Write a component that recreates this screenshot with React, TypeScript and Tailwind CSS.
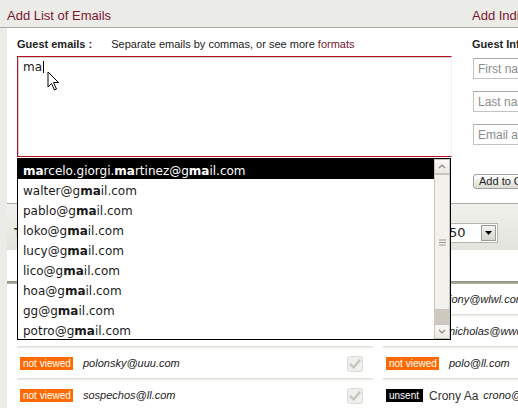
const suggestions = [
  "marcelo.giorgi.martinez@gmail.com",
  "walter@gmail.com",
  "pablo@gmail.com",
  "loko@gmail.com",
  "lucy@gmail.com",
  "lico@gmail.com",
  "hoa@gmail.com",
  "gg@gmail.com",
  "potro@gmail.com",
];

type Cell = { badge: string; name?: string; email: string };
type Row = { left: Cell; right: Cell };

const rows: Row[] = [
  { left: { badge: "not viewed", email: "martin@wlwl.com" }, right: { badge: "not viewed", email: "jony@wlwl.com" } },
  { left: { badge: "not viewed", email: "pedro@wwc.com" }, right: { badge: "not viewed", email: "nicholas@wwc.com" } },
  { left: { badge: "not viewed", email: "polonsky@uuu.com" }, right: { badge: "not viewed", email: "polo@ll.com" } },
  { left: { badge: "not viewed", email: "sospechos@ll.com" }, right: { badge: "unsent", name: "Crony Aa", email: "crono@ll.com" } },
];

function Match({ text }: { text: string }) {
  const parts = text.split("ma");
  return (
    <>
      {parts.map((part, i) => (
        <span key={i}>
          {i > 0 && <b className="font-bold">ma</b>}
          {part}
        </span>
      ))}
    </>
  );
}

function Badge({ kind }: { kind: string }) {
  if (kind === "unsent") {
    return (
      <span className="flex h-[13px] w-[37px] shrink-0 items-center bg-black pl-[3px] text-[10px] leading-[13px] text-white">
        unsent
      </span>
    );
  }
  return (
    <span className="flex h-[13px] w-[53px] shrink-0 items-center bg-[#ff6a00] pl-[3px] text-[10px] leading-[13px] text-white">
      {kind}
    </span>
  );
}

function CheckIcon() {
  return (
    <svg width="16" height="16" viewBox="0 0 16 16" className="ml-auto mr-[10px] shrink-0">
      <rect x="0.5" y="0.5" width="15" height="15" rx="2" fill="#efefec" stroke="#dcdcd6" />
      <path d="M3.5 8.5 L6.5 11.5 L12.5 4.5" fill="none" stroke="#c4c4bf" strokeWidth="2.4" strokeLinecap="round" strokeLinejoin="round" />
    </svg>
  );
}

function Separator() {
  return <div className="h-[3px] bg-gradient-to-b from-[#d9d9d2] to-white" />;
}

function GuestCell({ cell, check }: { cell: Cell; check: boolean }) {
  return (
    <div className="flex h-[29px] items-center whitespace-nowrap pl-[3px]">
      <Badge kind={cell.badge} />
      {cell.name && <span className="ml-[6px] text-[12px] text-[#333]">{cell.name}</span>}
      <span className={`${cell.name ? "ml-[5px]" : "ml-[10px]"} text-[11px] italic text-[#222]`}>
        {cell.email}
      </span>
      {check && <CheckIcon />}
    </div>
  );
}

function ScrollArrow({ up }: { up: boolean }) {
  return (
    <div className="flex h-[15px] items-center justify-center border border-[#c9c5bd] bg-gradient-to-b from-[#fbfaf8] to-[#ebe8e2]">
      <svg width="8" height="5" viewBox="0 0 8 5">
        <path d={up ? "M1 4 L4 1 L7 4" : "M1 1 L4 4 L7 1"} fill="none" stroke="#8a8680" strokeWidth="1.2" />
      </svg>
    </div>
  );
}

export default function App() {
  return (
    <div className="relative h-[408px] w-[518px] overflow-hidden bg-[#ebebe7] font-['Liberation_Sans',Arial,sans-serif] text-[#222]">
      <header className="flex h-[28px] border-b border-[#a9a9a2]">
        <h1 className="w-[465px] shrink-0 pl-[7px] pt-[8px] text-[13px] leading-[15px] text-[#7a1730]">Add List of Emails</h1>
        <h1 className="whitespace-nowrap pl-[7px] pt-[8px] text-[13px] leading-[15px] text-[#7a1730]">Add Individual Guest</h1>
      </header>

      <div className="ml-[7px] flex h-[175px] bg-white">
        <div className="w-[458px] shrink-0 pl-[10px] pt-[10px]">
          <div className="flex h-[13px] items-baseline whitespace-nowrap">
            <span className="text-[11px] font-bold leading-[13px]">Guest emails :</span>
            <span className="ml-[19px] text-[11px] leading-[13px]">
              Separate emails by commas, or see more <span className="text-[#7a1730]">formats</span>
            </span>
          </div>
          <div className="mt-[5px] h-[101px] w-[435px] border border-[#b8101e] border-r-[#f2f2f2] bg-white pl-[5px] pt-[3px] font-['DejaVu_Sans',sans-serif] text-[12px] leading-[14px] shadow-[inset_1px_1px_0_#d4d4d4]">
            ma<span className="ml-[1px] inline-block h-[12px] w-0 border-l border-black align-[-2px]" />
          </div>
        </div>
        <div className="min-w-0 flex-1 pl-[7px] pt-[10px]">
          <div className="whitespace-nowrap text-[11px] font-bold leading-[13px]">Guest Info:</div>
          <div className="ml-[1px] mt-[7px] flex flex-col gap-[12px]">
            {["First name", "Last name", "Email address"].map((p) => (
              <div key={p} className="flex h-[21px] w-[120px] shrink-0 items-center whitespace-nowrap border border-[#c2c2c2] border-t-[#a9a9a9] pl-[4px] text-[12px] text-[#8c8c8c]">
                {p}
              </div>
            ))}
          </div>
          <button className="ml-[1px] mt-[29px] flex h-[15px] items-center whitespace-nowrap rounded-[3px] border border-[#a0a0a0] bg-gradient-to-b from-white to-[#dcdcd5] px-[5px] text-[11px] leading-[13px] text-[#222]">
            Add to Guest List
          </button>
        </div>
      </div>

      <section className="ml-[7px]">
        <div className="flex h-[47px] items-center border-t border-[#a9a9a2] bg-gradient-to-b from-[#f1f1ed] to-[#e4e4de] pt-[12px]">
          <h2 className="whitespace-nowrap pl-[7px] text-[13px] font-bold">Track Guests</h2>
          <div className="ml-auto mr-[20px] flex h-[20px] w-[60px] items-center border border-[#b5b5b0] bg-white font-['DejaVu_Sans',sans-serif] text-[13px]">
            <span className="pl-[10px]">50</span>
            <span className="ml-auto mr-[1px] flex h-[16px] w-[15px] items-center justify-center border border-[#9c9c96] bg-gradient-to-b from-[#f4f4f0] to-[#d6d6d0]">
              <svg width="7" height="4" viewBox="0 0 7 4">
                <path d="M0 0 L7 0 L3.5 4 Z" fill="#000" />
              </svg>
            </span>
          </div>
        </div>
        <div className="h-[31px] bg-white" />
        <div className="h-[3px] bg-gradient-to-b from-[#8f8f7c] to-[#b4b4a6]" />
        <div className="grid grid-cols-[356px_200px] gap-x-[10px] bg-white pl-[10px]">
          {rows.map((row, i) => (
            <div key={i} className="contents">
              <div>
                {i > 0 ? <Separator /> : <div className="h-[1px]" />}
                <GuestCell cell={row.left} check />
              </div>
              <div>
                {i > 0 ? <Separator /> : <div className="h-[1px]" />}
                <GuestCell cell={row.right} check={false} />
              </div>
            </div>
          ))}
        </div>
      </section>

      {/* autocomplete menu over the page */}
      <div className="absolute left-[17px] top-[158px] flex h-[182px] w-[434px] border border-black bg-white font-['DejaVu_Sans',sans-serif] text-[12px]">
        <ul className="flex-1">
          {suggestions.map((s, i) => (
            <li
              key={s}
              className={`flex h-[20px] items-center whitespace-nowrap pl-[5px] pt-[3px] leading-[14px] ${i === 0 ? "bg-black text-white" : "text-[#1a1a1a]"}`}
            >
              <Match text={s} />
            </li>
          ))}
        </ul>
        <div className="flex w-[16px] flex-col bg-[#e8e4dc]">
          <ScrollArrow up />
          <div className="flex h-[136px] items-center justify-center border border-[#c9c5bd] bg-[#f3f1ec]">
            <svg width="7" height="7" viewBox="0 0 7 7">
              <path d="M0 1 H7 M0 3.5 H7 M0 6 H7" stroke="#9d9991" strokeWidth="1" />
            </svg>
          </div>
          <div className="flex-1 bg-[#cfc8bf]" />
          <ScrollArrow up={false} />
        </div>
      </div>

      {/* mouse pointer */}
      <svg className="absolute left-[47px] top-[71px]" width="13" height="20" viewBox="0 0 13 20">
        <path d="M1 1 L1 16 L4.5 12.5 L7.5 19 L9.5 18 L6.5 11.5 L11.5 11.5 Z" fill="#fff" stroke="#000" strokeWidth="1" strokeLinejoin="round" />
      </svg>
    </div>
  );
}
